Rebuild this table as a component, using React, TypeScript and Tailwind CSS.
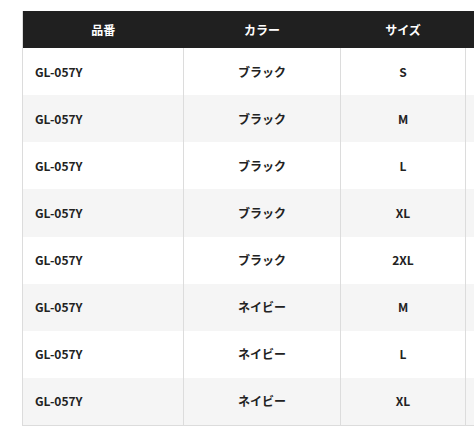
const rows: [string, string, string][] = [
  ["GL-057Y", "ブラック", "S"],
  ["GL-057Y", "ブラック", "M"],
  ["GL-057Y", "ブラック", "L"],
  ["GL-057Y", "ブラック", "XL"],
  ["GL-057Y", "ブラック", "2XL"],
  ["GL-057Y", "ネイビー", "M"],
  ["GL-057Y", "ネイビー", "L"],
  ["GL-057Y", "ネイビー", "XL"],
];

// Size chart table; it is wider than the window, so the last column is cut off.
export default function App() {
  return (
    <div className="h-[431px] w-[474px] overflow-hidden bg-white pl-[22px] pt-[11px] font-['Noto_Sans_CJK_JP','Noto_Sans',sans-serif] text-[12px] font-bold text-[#222]">
      <table className="w-[560px] table-fixed border-collapse border-b border-l border-[#dcdcdc]">
        <colgroup>
          <col className="w-[161px]" />
          <col className="w-[157px]" />
          <col className="w-[125px]" />
          <col className="w-[117px]" />
        </colgroup>
        <thead>
          <tr className="h-[37px] bg-[#202020] text-white">
            <th className="text-center font-bold">品番</th>
            <th className="text-center font-bold">カラー</th>
            <th className="text-center font-bold">サイズ</th>
            <th className="text-center font-bold"></th>
          </tr>
        </thead>
        <tbody>
          {rows.map(([code, color, size], i) => (
            <tr key={i} className={i % 2 === 1 ? "h-[47.15px] bg-[#f5f5f5]" : "h-[47.15px] bg-white"}>
              <td className="border-r border-[#dcdcdc] pl-[12px] text-left">{code}</td>
              <td className="border-r border-[#dcdcdc] text-center">{color}</td>
              <td className="border-r border-[#dcdcdc] text-center">{size}</td>
              <td className="border-r border-[#dcdcdc] text-center"></td>
            </tr>
          ))}
        </tbody>
      </table>
    </div>
  );
}
